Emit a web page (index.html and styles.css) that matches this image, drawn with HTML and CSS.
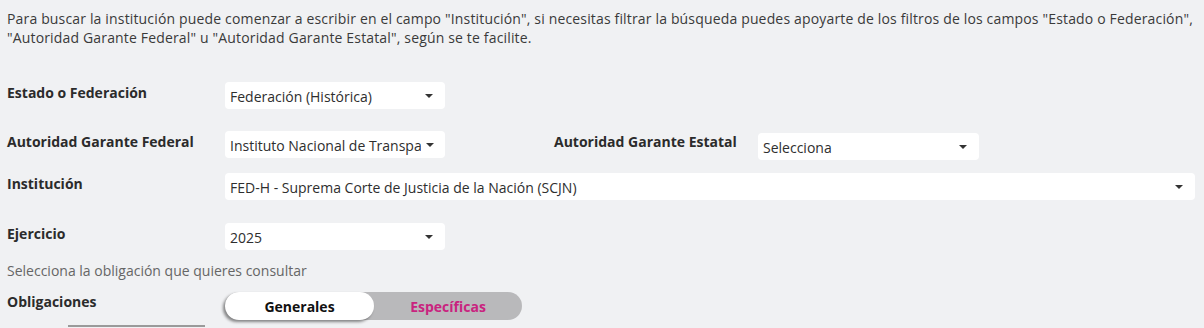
FILE: index.html
```html
<!DOCTYPE html>
<html lang="es">
<head>
<meta charset="utf-8">
<link rel="stylesheet" href="styles.css">
</head>
<body>
<div class="page">
  <p class="intro">Para buscar la institución puede comenzar a escribir en el campo "Institución", si necesitas filtrar la búsqueda puedes apoyarte de los filtros de los campos "Estado o Federación", "Autoridad Garante Federal" u "Autoridad Garante Estatal", según se te facilite.</p>

  <div class="row row-estado">
    <label class="lbl">Estado o Federación</label>
    <div class="sel"><span class="val">Federación (Histórica)</span><span class="caret"></span></div>
  </div>

  <div class="row row-autoridad">
    <label class="lbl">Autoridad Garante Federal</label>
    <div class="sel sel-trunc"><span class="val">Instituto Nacional de Transpa</span><span class="caret"></span></div>
    <label class="lbl lbl-estatal">Autoridad Garante Estatal</label>
    <div class="sel sel-estatal"><span class="val">Selecciona</span><span class="caret"></span></div>
  </div>

  <div class="row row-inst">
    <label class="lbl">Institución</label>
    <div class="sel sel-wide"><span class="val">FED-H - Suprema Corte de Justicia de la Nación (SCJN)</span><span class="caret"></span></div>
  </div>

  <div class="row row-ejercicio">
    <label class="lbl">Ejercicio</label>
    <div class="sel"><span class="val">2025</span><span class="caret"></span></div>
  </div>

  <p class="hint">Selecciona la obligación que quieres consultar</p>

  <div class="row row-oblig">
    <label class="lbl">Obligaciones</label>
    <div class="toggle">
      <span class="opt opt-on">Generales</span>
      <span class="opt opt-off">Específicas</span>
    </div>
  </div>

  <div class="tabline"></div>
</div>
</body>
</html>
```

FILE: styles.css
```css
html, body {
  margin: 0;
  padding: 0;
  background: #f0f1f3;
}
body {
  font-family: "Open Sans", "Noto Sans", sans-serif;
  font-size: 14px;
  color: #333333;
  width: 1204px;
  height: 328px;
  overflow: hidden;
}
.page {
  padding: 0 9px 0 7px;
}
.intro {
  margin: 0;
  padding-top: 9px;
  line-height: 19px;
  letter-spacing: 0.16px;
  color: #3a3a3a;
}
.row {
  display: flex;
  align-items: flex-start;
}
.lbl {
  width: 218px;
  flex: none;
  font-weight: 700;
  color: #2b2b2b;
  line-height: 20px;
  padding-top: 1px;
}
.sel {
  position: relative;
  width: 220px;
  height: 27px;
  background: #ffffff;
  border-radius: 4px;
  box-sizing: border-box;
  padding: 0 24px 0 5px;
  display: flex;
  align-items: center;
  flex: none;
}
.val {
  white-space: nowrap;
  overflow: hidden;
  color: #2e2e2e;
  padding-top: 2px;
}
.caret {
  position: absolute;
  right: 12px;
  top: 12px;
  width: 0;
  height: 0;
  border-left: 4px solid transparent;
  border-right: 4px solid transparent;
  border-top: 4px solid #333;
}
.sel-trunc {
  padding-right: 24px;
}
.sel-trunc .caret {
  right: 11px;
}
.row-estado { margin-top: 35px; }
.row-autoridad { margin-top: 22px; }
.row-inst { margin-top: 13px; }
.row-ejercicio { margin-top: 23px; }
.lbl-estatal {
  margin-left: 109px;
  width: 204px;
}
.sel-estatal {
  width: 221px;
  margin-top: 2px;
}
.sel-wide {
  flex: 1;
  width: auto;
}
.hint {
  margin: 11px 0 0;
  line-height: 20px;
  color: #666666;
}
.row-oblig { margin-top: 11px; }
.row-oblig .lbl { padding-top: 0; }
.toggle {
  display: flex;
  width: 297px;
  height: 28px;
  background: #b9b9bb;
  border-radius: 14px;
}
.opt {
  flex: none;
  display: flex;
  align-items: center;
  justify-content: center;
  font-weight: 700;
  font-size: 14px;
}
.opt-on {
  width: 149px;
  background: #ffffff;
  color: #111111;
  border-radius: 14px;
  box-shadow: -2px 2px 3px rgba(0,0,0,0.45);
}
.opt-off {
  flex: 1;
  color: #c9237f;
}
.tabline {
  margin: 5px 0 0 61px;
  width: 137px;
  height: 2px;
  background: #9a9a9a;
}
```
